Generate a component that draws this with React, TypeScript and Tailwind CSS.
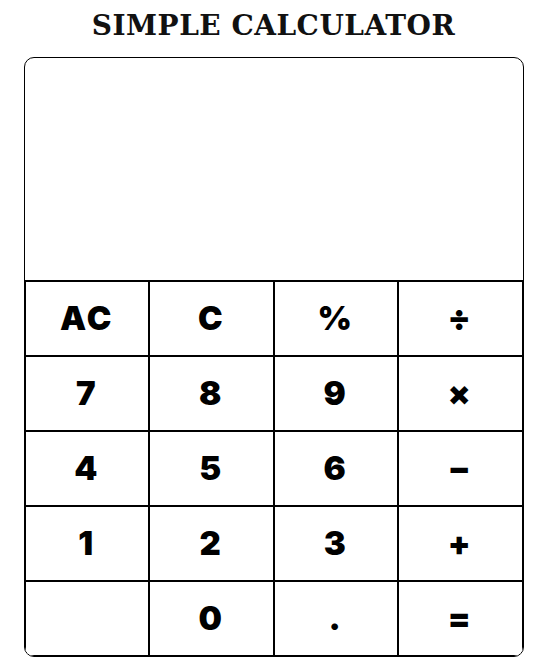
const keys = ['AC', 'C', '%', '÷', '7', '8', '9', '×', '4', '5', '6', '−', '1', '2', '3', '+', '', '0', '.', '=']

export default function App() {
  return (
    <div className="min-h-screen bg-white flex flex-col items-center pt-[6px]">
      <h1 className="text-[28px] leading-[40px] font-bold tracking-[0.5px] text-[#111] font-['DejaVu_Serif',serif]">
        SIMPLE CALCULATOR
      </h1>
      <div className="mt-[11px] w-[500px] border border-black rounded-[10px] overflow-hidden">
        {/* Display */}
        <div className="h-[223px] border-b border-black" />

        {/* Keypad */}
        <div className="grid grid-cols-4">
          {keys.map((k, i) => (
            <button
              key={i}
              className="h-[75px] border border-black bg-white text-black text-[33px] font-black tracking-[2px] font-['Inter',sans-serif] flex items-center justify-center"
            >
              {k}
            </button>
          ))}
        </div>
      </div>
    </div>
  )
}
